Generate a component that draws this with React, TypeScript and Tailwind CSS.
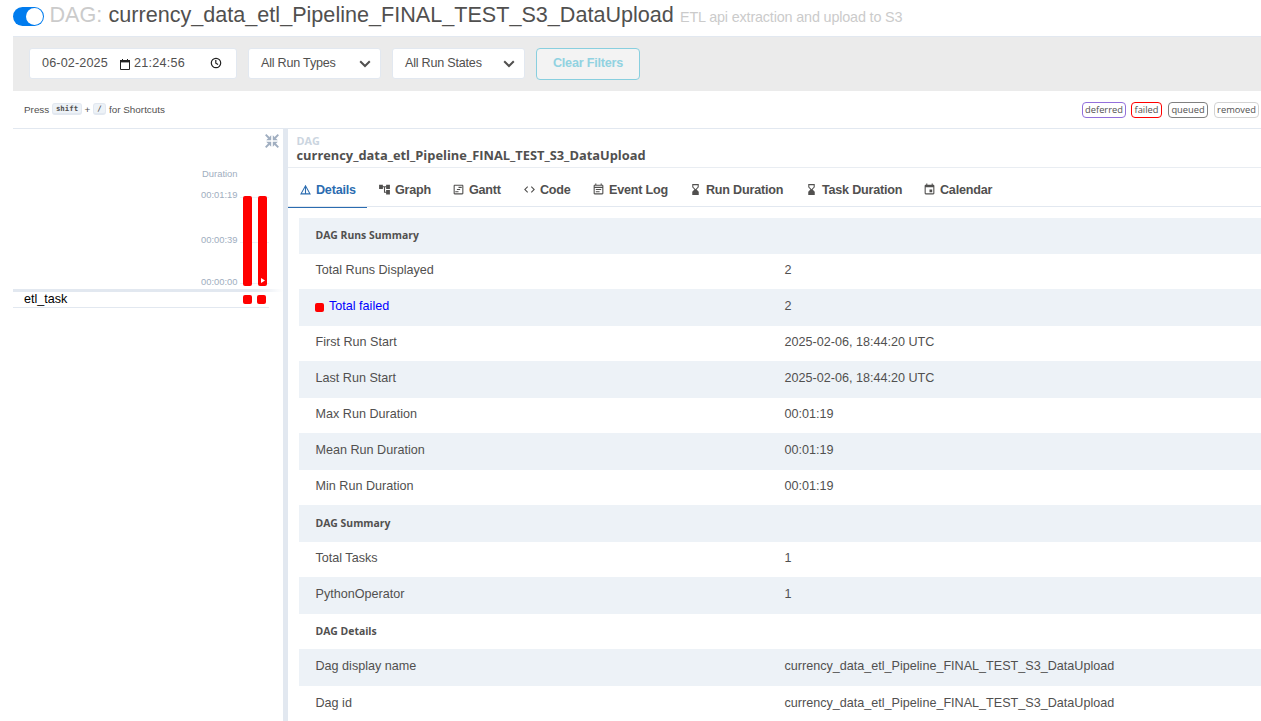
import React from "react";
import { MdDetails, MdAccountTree, MdOutlineViewTimeline, MdCode, MdOutlineEventNote, MdHourglassBottom, MdEvent } from "react-icons/md";

const tabs = [
  { label: "Details", icon: MdDetails, box: "w-[79px] pl-3" },
  { label: "Graph", icon: MdAccountTree, box: "w-[74px] pl-3" },
  { label: "Gantt", icon: MdOutlineViewTimeline, box: "w-[71px] pl-3" },
  { label: "Code", icon: MdCode, box: "w-[69px] pl-3" },
  { label: "Event Log", icon: MdOutlineEventNote, box: "w-[98px] pl-3" },
  { label: "Run Duration", icon: MdHourglassBottom, box: "w-[115px] pl-[11px]" },
  { label: "Task Duration", icon: MdHourglassBottom, box: "w-[118px] pl-3" },
  { label: "Calendar", icon: MdEvent, box: "w-[94px] pl-3" },
];

type Row = { label: string; value?: string; kind?: "head" | "failed"; h: string };
const rows: Row[] = [
  { label: "DAG Runs Summary", kind: "head", h: "h-9 pb-px" },
  { label: "Total Runs Displayed", value: "2", h: "h-[35px] pb-[2px]" },
  { label: "Total failed", value: "2", kind: "failed", h: "h-[37px] pb-[2px]" },
  { label: "First Run Start", value: "2025-02-06, 18:44:20 UTC", h: "h-[35px] pb-[2px]" },
  { label: "Last Run Start", value: "2025-02-06, 18:44:20 UTC", h: "h-[37px] pb-[2px]" },
  { label: "Max Run Duration", value: "00:01:19", h: "h-[35px] pb-[2px]" },
  { label: "Mean Run Duration", value: "00:01:19", h: "h-[37px] pb-[2px]" },
  { label: "Min Run Duration", value: "00:01:19", h: "h-[35px] pb-[2px]" },
  { label: "DAG Summary", kind: "head", h: "h-[37px]" },
  { label: "Total Tasks", value: "1", h: "h-[35px] pb-[2px]" },
  { label: "PythonOperator", value: "1", h: "h-[37px] pb-[2px]" },
  { label: "DAG Details", kind: "head", h: "h-[35px]" },
  { label: "Dag display name", value: "currency_data_etl_Pipeline_FINAL_TEST_S3_DataUpload", h: "h-[37px] pb-[3px]" },
  { label: "Dag id", value: "currency_data_etl_Pipeline_FINAL_TEST_S3_DataUpload", h: "h-[35px] pb-px" },
];

const states = [
  { label: "deferred", cls: "w-11 border-[#9370db]" },
  { label: "failed", cls: "ml-[5px] w-[31px] border-[#ff0000]" },
  { label: "queued", cls: "ml-[6px] w-10 border-[#808080]" },
  { label: "removed", cls: "ml-[6px] w-[45px] border-[#d3d3d3]" },
];

function Chevron() {
  return (
    <svg width="12" height="8" viewBox="0 0 12 8" fill="none" stroke="#51504f" strokeWidth="2">
      <path d="M1.2 1.3 6 6l4.8-4.7" />
    </svg>
  );
}

function ShrinkIcon() {
  return (
    <svg width="14" height="14" viewBox="0 0 14 14" fill="currentColor" stroke="currentColor">
      <path d="M.7.7 4 4M13.3.7 10 4M.7 13.3 4 10M13.3 13.3 10 10" strokeWidth="1.9" />
      <path stroke="none" d="M6.200 1.200V6.200H1.200zM7.800 1.200V6.200h5zM6.200 12.800V7.800H1.200zM7.800 12.800V7.800h5z" />
    </svg>
  );
}

function Select({ label }: { label: string }) {
  return (
    <div className="flex h-[31px] w-[132.500px] items-center justify-between rounded-[3px] border border-[#e2e8f0] bg-white pr-[9px] pl-3">
      <span className="text-[12.6px] tracking-[-0.22px]">{label}</span>
      <Chevron />
    </div>
  );
}

function Key({ children, width }: { children: string; width: string }) {
  return (
    <kbd className={`mb-px flex h-3 items-center justify-center rounded-[3px] border border-b-2 border-[#e2e8f0] bg-[#edf2f7] font-['DejaVu_Sans_Mono',monospace] text-[7.4px] font-bold ${width}`}>
      {children}
    </kbd>
  );
}

export default function App() {
  return (
    <div className="flex h-[721px] w-[1261px] flex-col overflow-hidden bg-white pl-[13px] font-['Liberation_Sans',Arial,sans-serif] text-[#51504f]">
      <header className="flex h-9 shrink-0 items-start whitespace-nowrap">
        <div className="mt-[7px] flex h-[19px] w-[31px] shrink-0 items-center justify-end rounded-full bg-[#017cee] pr-px">
          <div className="size-[17px] rounded-full bg-white" />
        </div>
        <h1 className="flex items-baseline">
          <span className="ml-[5.5px] w-[59px] text-[21.6px] leading-[29px] text-[#cbcbcb]">DAG:</span>
          <span className="w-[571.5px] text-[21.6px] leading-[29px]">currency_data_etl_Pipeline_FINAL_TEST_S3_DataUpload</span>
          <span className="text-[14.4px] tracking-[-0.17px] text-[#cbcbcb]">ETL api extraction and upload to S3</span>
        </h1>
      </header>

      <div className="flex h-[55px] shrink-0 items-start gap-[11.500px] border-t border-[#e2e8f0] bg-[#ebebeb] pt-[11px] pl-4">
        <div className="-mr-[0.5px] flex h-[31px] w-[208px] items-center rounded-[3px] border border-[#e2e8f0] bg-white pl-3 text-[12.6px]">
          <span className="w-[78px] tracking-[0.15px]">06-02-2025</span>
          <svg width="10" height="11" viewBox="0 0 10 11" fill="none" stroke="#222" className="mt-px mr-[4px]">
            <path d="M.5 1.5h9v9h-9z" />
            <path d="M0 2.2h10" strokeWidth="2.4" />
            <path d="M2.5 0v2M7.5 0v2" />
          </svg>
          <span className="w-[76px] tracking-[0.25px]">21:24:56</span>
          <svg width="12" height="12" viewBox="0 0 12 12" fill="none" stroke="#222" strokeWidth="1.2" className="mb-px">
            <circle cx="6" cy="6" r="4.7" />
            <path d="M5.8 3v3.2l2.3 1.4" />
          </svg>
        </div>
        <Select label="All Run Types" />
        <Select label="All Run States" />
        <button className="h-8 w-[104px] rounded-[4px] border border-[#88cfdf] bg-[#f3f3f3] pb-[2px] text-[12.6px] font-bold tracking-[-0.2px] text-[#91d2e1]">Clear Filters</button>
      </div>

      <div className="flex h-[38px] shrink-0 items-center justify-between border-b border-[#e2e8f0] pr-[2px] pl-[11px] text-[9.9px]">
        <div className="flex items-center whitespace-nowrap pt-px">
          <span className="w-[28px]">Press</span>
          <Key width="w-[30px]">shift</Key>
          <span className="w-[11px] text-center">+</span>
          <Key width="w-[13px]">/</Key>
          <span className="ml-[3px]">for Shortcuts</span>
        </div>
        <div className="flex font-['Open_Sans','Noto_Sans',sans-serif] text-[9.3px]">
          {states.map((s) => (
            <div key={s.label} className={`flex h-4 items-center justify-center rounded-[4px] border pt-px leading-[14px] ${s.cls}`}>{s.label}</div>
          ))}
        </div>
      </div>

      <div className="flex min-h-0 flex-1">
        <aside className="w-[270px] shrink-0">
          <div className="flex h-[27px] justify-end pt-[5px] pr-[4px] text-[#a0aec0]">
            <ShrinkIcon />
          </div>
          <div className="relative h-[133px] text-[9.4px] text-[#a0aec0]">
            <div className="flex h-full flex-col items-end pr-[45.500px] leading-[10px]">
              <span className="mt-[13px]">Duration</span>
              <span className="mt-[11px]">00:01:19</span>
              <span className="mt-[35px]">00:00:39</span>
              <span className="mt-8">00:00:00</span>
            </div>
            <div className="absolute top-[41px] left-[227px] h-[87px] w-[29px] border-y border-[#edf2f7]">
              <div className="mt-[44px] h-px bg-[#edf2f7]" />
            </div>
            <div className="absolute top-[40px] left-[230px] flex gap-[6px]">
              <div className="h-[90px] w-[9px] rounded-[2px] bg-[#ff0000]" />
              <div className="flex h-[90px] w-[9px] items-end justify-center rounded-[2px] bg-[#ff0000] pb-[3px]">
                <svg width="4" height="5" viewBox="0 0 4 5"><path d="M0 0l4 2.5L0 5z" fill="#fff" /></svg>
              </div>
            </div>
          </div>
          <div className="h-[3px] bg-linear-to-r from-[#e2e8f0] from-90% to-white" />
          <div className="flex h-4 w-[256px] items-center border-b border-[#e2e8f0] pl-[11px] text-black">
            <span className="w-[219px] pb-[2px] text-[12.6px] leading-[14px]">etl_task</span>
            <span className="mb-px size-[9px] rounded-[2px] bg-[#ff0000]" />
            <span className="mb-px ml-[5px] size-[9px] rounded-[2px] bg-[#ff0000]" />
          </div>
        </aside>
        <div className="w-[5px] shrink-0 bg-[#e2e8f0]" />
        <main className="min-w-0 flex-1">
          <div className="h-[39px] border-b border-[#e9edf2] pt-[5px] pl-[8.500px] font-['Open_Sans','Noto_Sans',sans-serif] font-bold">
            <div className="text-[10.8px] leading-[14px] text-[#cbd5e0]">DAG</div>
            <div className="text-[12.85px] leading-[14px]">currency_data_etl_Pipeline_FINAL_TEST_S3_DataUpload</div>
          </div>
          <nav className="flex h-[39px] border-b border-[#e2e8f0] text-[12.6px] font-bold tracking-[-0.22px]">
            {tabs.map(({ label, icon: Icon, box }, i) => (
              <div key={label} className={`flex h-10 shrink-0 items-center gap-[3px] border-b whitespace-nowrap pt-[5px] ${box} ${i === 0 ? "border-[#2b6cb0] text-[#2b6cb0]" : "border-transparent"}`}>
                <Icon size={13} className="-ml-px mr-px mb-px shrink-0" />
                <span>{label}</span>
              </div>
            ))}
          </nav>
          <div className="mt-[11px] ml-[11px] text-[12.6px]">
            {rows.map((r, i) => (
              <div key={r.label} className={`flex items-center pl-[16.500px] ${r.h} ${i % 2 === 0 ? "bg-[#edf2f7]" : ""}`}>
                <div className="flex w-[469px] items-center">
                  {r.kind === "head" ? (
                    <span className="font-['Open_Sans','Noto_Sans',sans-serif] text-[10.4px] font-bold">{r.label}</span>
                  ) : r.kind === "failed" ? (
                    <>
                      <span className="mt-[3px] -ml-[0.5px] mr-[5px] size-[9px] rounded-[2px] bg-[#ff0000]" />
                      <span className="text-[#0000ff]">{r.label}</span>
                    </>
                  ) : (
                    <span>{r.label}</span>
                  )}
                </div>
                <span>{r.value}</span>
              </div>
            ))}
          </div>
        </main>
      </div>
    </div>
  );
}
